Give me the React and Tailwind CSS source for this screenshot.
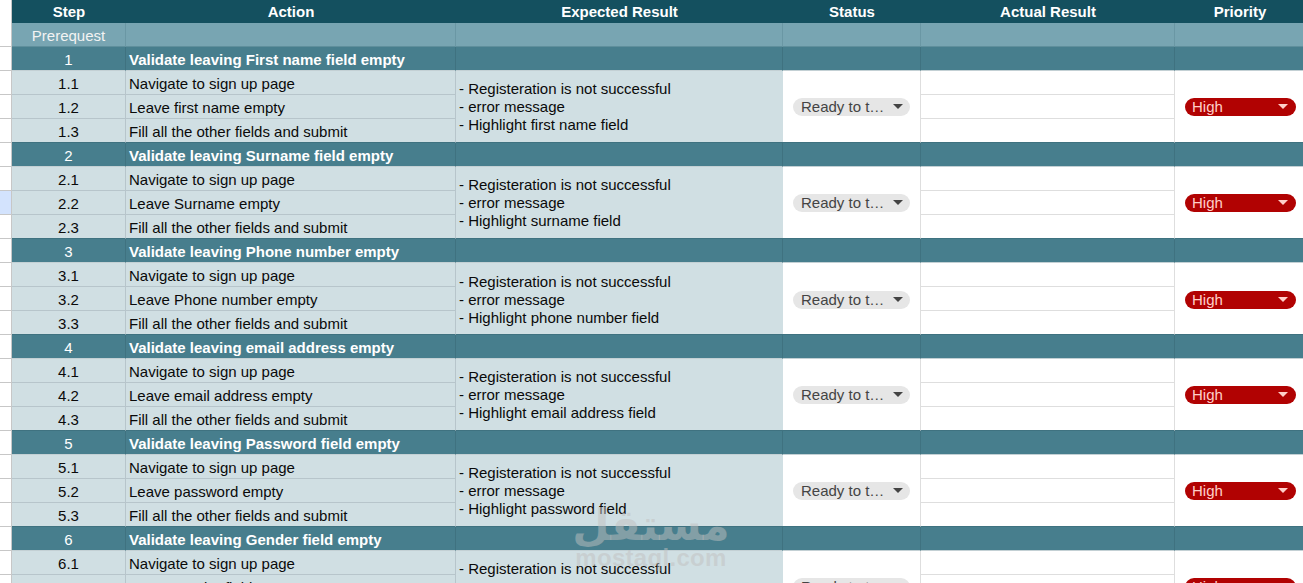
const COLS = "grid grid-cols-[12px_114px_330px_327px_138px_254px_130px]";
const FONT = "font-['Liberation_Sans',Arial,sans-serif]";

function Caret({ className }) {
  return (
    <svg width="10" height="5" viewBox="0 0 10 5" className={className}>
      <path d="M0 0H10L5 5Z" fill="currentColor" />
    </svg>
  );
}

function StatusPill() {
  return (
    <div className="flex h-[18px] w-[117px] items-center rounded-full bg-[#e6e6e6] pl-[8px] pr-[7px] text-[#444444]">
      <span className="whitespace-nowrap leading-[18px]">Ready to t…</span>
      <Caret className="ml-auto text-[#444444]" />
    </div>
  );
}

function PriorityPill() {
  return (
    <div className="flex h-[18px] w-[111px] items-center rounded-full bg-[#b10202] pl-[7px] pr-[8px] text-[#ffcfc9]">
      <span className="leading-[18px]">High</span>
      <Caret className="ml-auto text-[#ffcfc9]" />
    </div>
  );
}

function Gutter({ selected, row }) {
  return (
    <div
      style={row ? { gridRow: row } : undefined}
      className={`col-start-1 border-b border-r border-[#c7c7c7] ${selected ? "bg-[#d3e3fd]" : "bg-white"}`}
    />
  );
}

function Section({ num, title }) {
  const cell = "h-[24px] bg-[#477e8d] border-b border-r border-b-[#c3d0d4] border-r-[#3f7280]";
  return (
    <div className={COLS}>
      <Gutter />
      <div className={`${cell} flex items-center justify-center pt-[3px] text-white`}>{num}</div>
      <div className={`${cell} flex items-center pl-[3px] pt-[3px] font-bold text-white`}>{title}</div>
      <div className={cell} />
      <div className={cell} />
      <div className={cell} />
      <div className={`${cell} border-r-0`} />
    </div>
  );
}

function Group({ num, title, steps, expected, nudge, selectedRow }) {
  return (
    <>
      <Section num={num} title={title} />
      <div className={`${COLS} grid-rows-[repeat(3,24px)]`}>
        {steps.map((s, i) => {
          const last = i === 2;
          const edge = last ? "border-b-[#3f7280]" : "border-b-[#b7c5cb]";
          return (
            <div key={i} className="contents">
              <Gutter row={i + 1} selected={selectedRow === i} />
              <div style={{ gridRow: i + 1 }} className={`col-start-2 flex items-center justify-center border-b border-r border-r-[#b7c5cb] bg-[#d0dfe3] pt-[4px] text-[#0a0a0a] ${edge}`}>
                {num}.{i + 1}
              </div>
              <div style={{ gridRow: i + 1 }} className={`col-start-3 flex items-center border-b border-r border-r-[#b7c5cb] bg-[#d0dfe3] pl-[3px] pt-[4px] text-[#0a0a0a] ${edge}`}>
                {s}
              </div>
              <div style={{ gridRow: i + 1 }} className={`col-start-6 border-b border-r border-r-[#dedede] bg-white ${last ? "border-b-[#3f7280]" : "border-b-[#dedede]"}`} />
            </div>
          );
        })}
        <div className={`col-start-4 row-span-3 row-start-1 flex flex-col justify-center border-b border-b-[#3f7280] bg-[#d0dfe3] pl-[3px] text-[#0a0a0a] leading-[18px] ${nudge ? "pt-[3px]" : "pt-[1px]"}`}>
          <div>- Registeration is not successful</div>
          <div>- error message</div>
          <div>- {expected}</div>
        </div>
        <div className={`col-start-5 row-span-3 row-start-1 flex items-center border-b border-r border-b-[#3f7280] border-r-[#dedede] bg-white pl-[10px] ${nudge ? "pt-[2px]" : ""}`}>
          <StatusPill />
        </div>
        <div className={`col-start-7 row-span-3 row-start-1 flex items-center border-b border-b-[#3f7280] bg-white pl-[10px] ${nudge ? "pt-[2px]" : ""}`}>
          <PriorityPill />
        </div>
      </div>
    </>
  );
}

const GROUPS = [
  { title: "Validate leaving First name field empty", leave: "Leave first name empty", expected: "Highlight first name field" },
  { title: "Validate leaving Surname field empty", leave: "Leave Surname empty", expected: "Highlight surname field", selectedRow: 1 },
  { title: "Validate leaving Phone number empty", leave: "Leave Phone number empty", expected: "Highlight phone number field", nudge: true },
  { title: "Validate leaving email address empty", leave: "Leave email address empty", expected: "Highlight email address field" },
  { title: "Validate leaving Password field empty", leave: "Leave password empty", expected: "Highlight password field" },
  { title: "Validate leaving Gender field empty", leave: "Leave gender field empty", expected: "Highlight gender field" },
];

export default function App() {
  const headers = ["Step", "Action", "Expected Result", "Status", "Actual Result", "Priority"];
  const pre = "h-[24px] bg-[#78a5b2] border-b border-r border-b-[#5f8f9c] border-r-[#6a97a4]";
  return (
    <div className={`relative h-[583px] w-[1303px] overflow-hidden bg-white text-[15px] ${FONT}`}>
      <div className={`${COLS} h-[23px]`}>
        <div className="border-b border-r border-[#c7c7c7] bg-white" />
        {headers.map((h) => (
          <div key={h} className="flex items-center justify-center bg-[#14505f] pt-[1px] font-bold text-white">
            {h}
          </div>
        ))}
      </div>
      <div className={COLS}>
        <Gutter />
        <div className={`${pre} flex items-center justify-center pt-[4px] text-[#f3f3f3]`}>Prerequest</div>
        <div className={pre} />
        <div className={pre} />
        <div className={pre} />
        <div className={pre} />
        <div className={`${pre} border-r-0`} />
      </div>
      {GROUPS.map((g, i) => (
        <Group
          key={i}
          num={i + 1}
          title={g.title}
          nudge={g.nudge}
          selectedRow={g.selectedRow}
          expected={g.expected}
          steps={["Navigate to sign up page", g.leave, "Fill all the other fields and submit"]}
        />
      ))}
      <div className="pointer-events-none absolute left-[571px] top-[500px] flex w-[160px] flex-col items-center font-bold text-[rgba(192,192,192,0.5)]">
        <span dir="rtl" lang="ar" className="font-['DejaVu_Sans',sans-serif] text-[43px] leading-[50px]">مستقل</span>
        <span className="text-[24px] leading-[16px] tracking-[0.3px]">mostaql.com</span>
      </div>
    </div>
  );
}
